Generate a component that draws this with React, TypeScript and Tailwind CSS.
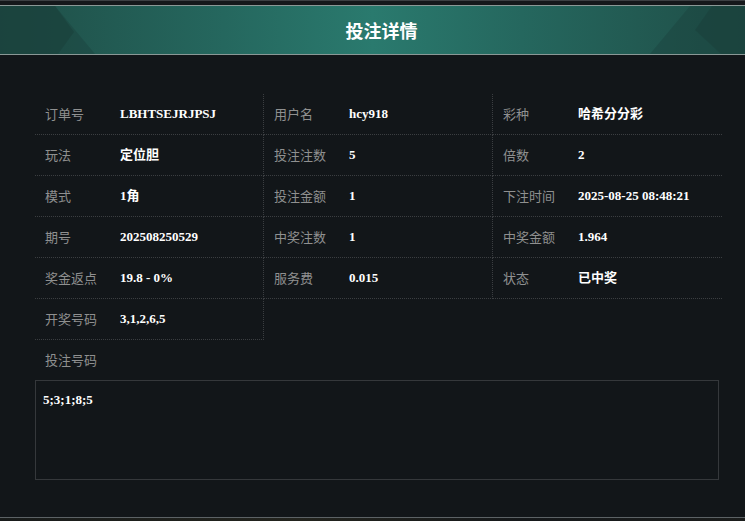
import React from "react";

const rows: [string, string][][] = [
  [["订单号", "LBHTSEJRJPSJ"], ["用户名", "hcy918"], ["彩种", "哈希分分彩"]],
  [["玩法", "定位胆"], ["投注注数", "5"], ["倍数", "2"]],
  [["模式", "1角"], ["投注金额", "1"], ["下注时间", "2025-08-25 08:48:21"]],
  [["期号", "202508250529"], ["中奖注数", "1"], ["中奖金额", "1.964"]],
  [["奖金返点", "19.8 - 0%"], ["服务费", "0.015"], ["状态", "已中奖"]],
];

const labelCls =
  "w-[75px] shrink-0 text-[13px] text-[#8f9090] font-['Noto_Sans_CJK_SC',sans-serif]";
const valueCls =
  "text-[13px] font-bold text-white font-['Liberation_Serif','Noto_Sans_CJK_SC',serif]";

function Cell({ label, value, last }: { label: string; value: string; last?: boolean }) {
  return (
    <div
      className={
        "h-[41px] flex items-center pl-[10px] border-b border-dotted border-[#3b3e41] " +
        (last ? "" : "border-r")
      }
    >
      <span className={labelCls}>{label}</span>
      <span className={valueCls}>{value}</span>
    </div>
  );
}

export default function App() {
  return (
    <div className="w-[745px] h-[521px] bg-[#121619] flex flex-col overflow-hidden">
      <div className="h-px bg-[#3c4043]" />
      <div className="h-[4px] bg-[#15181b]" />
      <div className="h-px bg-[#8a9896]" />
      <div className="relative h-[48px] bg-[linear-gradient(90deg,#1f4e47_0%,#25675e_30%,#2a7a6e_50%,#25675e_70%,#1f4e47_100%)] flex items-center justify-center">
        <svg className="absolute left-0 top-0" width="100" height="48" viewBox="0 0 100 48">
          <polygon points="0,0 55,0 95,48 0,48" fill="#1a433d" opacity="0.45" />
          <polygon points="0,0 55,0 74,26 58,48 0,48" fill="#1a403a" opacity="0.55" />
        </svg>
        <svg className="absolute right-0 top-0" width="100" height="48" viewBox="0 0 100 48">
          <polygon points="100,0 45,0 5,48 100,48" fill="#1a433d" opacity="0.45" />
          <polygon points="100,0 67,0 50,24 76,48 100,48" fill="#1a403a" opacity="0.55" />
        </svg>
        <span className="relative pl-[18px] text-[18px] font-bold text-white font-['Noto_Sans_CJK_SC',sans-serif]">投注详情</span>
      </div>
      <div className="h-px bg-[#8a9896]" />
      <div className="flex-1 pt-[39px] pl-[35px]">
        <div className="w-[687px] grid grid-cols-[229px_229px_229px]">
          {rows.map((r, i) => (
            <React.Fragment key={i}>
              <Cell label={r[0][0]} value={r[0][1]} />
              <Cell label={r[1][0]} value={r[1][1]} />
              <Cell label={r[2][0]} value={r[2][1]} last />
            </React.Fragment>
          ))}
          <Cell label="开奖号码" value="3,1,2,6,5" />
        </div>
        <div className="h-[40px] flex items-center pl-[10px]">
          <span className={labelCls}>投注号码</span>
        </div>
        <div className="w-[684px] h-[100px] border border-[#35383b] pt-[10px] pl-[7px] text-[13px] leading-[18px] font-bold text-white font-['Liberation_Serif',serif]">
          5;3;1;8;5
        </div>
      </div>
      <div className="h-px bg-[#5c6265]" />
      <div className="h-[3px] bg-[linear-gradient(90deg,#181b1a,#23241e_40%,#15181a_70%,#1b1d1c)]" />
    </div>
  );
}
